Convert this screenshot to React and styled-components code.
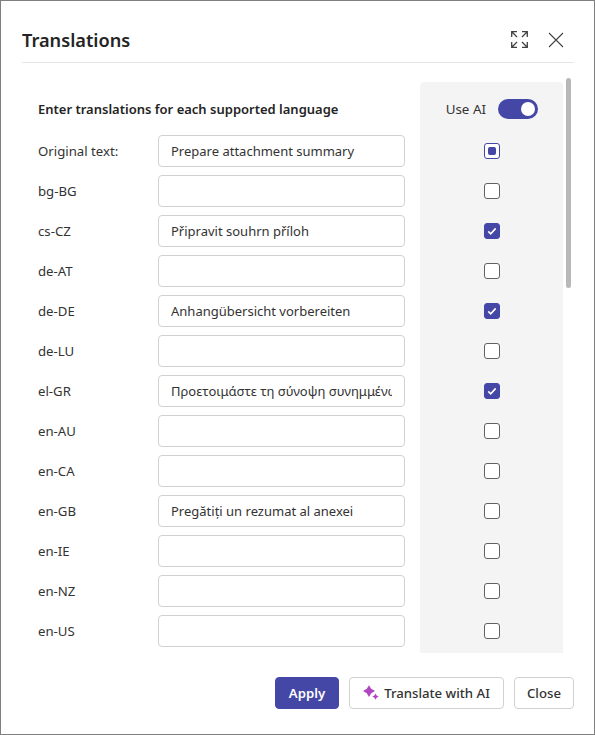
import React from 'react';
import styled, { createGlobalStyle } from 'styled-components';

const GlobalStyle = createGlobalStyle`
  html, body { margin: 0; padding: 0; background: #fff; }
  body { font-family: "Noto Sans", "Open Sans", "Liberation Sans", sans-serif; color: #242424; }
  * { box-sizing: border-box; }
`;

const rows = [
  { label: 'Original text:', value: 'Prepare attachment summary', state: 'mixed' },
  { label: 'bg-BG' },
  { label: 'cs-CZ', value: 'Připravit souhrn příloh', state: 'checked' },
  { label: 'de-AT' },
  { label: 'de-DE', value: 'Anhangübersicht vorbereiten', state: 'checked' },
  { label: 'de-LU' },
  { label: 'el-GR', value: 'Προετοιμάστε τη σύνοψη συνημμένων', state: 'checked' },
  { label: 'en-AU' },
  { label: 'en-CA' },
  { label: 'en-GB', value: 'Pregătiți un rezumat al anexei' },
  { label: 'en-IE' },
  { label: 'en-NZ' },
  { label: 'en-US' },
];

const Dialog = styled.div`
  position: relative;
  width: 595px;
  height: 735px;
  border: 1px solid #7f7f7f;
  background: #fff;
  overflow: hidden;
  display: flex;
  flex-direction: column;
`;

const Header = styled.header`
  height: 62px;
  margin: 0 20px 0 21px;
  border-bottom: 1px solid #e6e6e6;
  display: flex;
  align-items: center;
  justify-content: space-between;
  padding-top: 16px;
`;

const Title = styled.h1`
  margin: 0;
  font-size: 18.2px;
  font-weight: 600;
  line-height: 26px;
`;

const HeaderActions = styled.div`
  display: flex;
  align-items: center;
  gap: 20px;
  margin-right: 10px;
`;

const IconButton = styled.button`
  padding: 0;
  border: 0;
  background: none;
  display: flex;
  color: #424242;
`;

const Body = styled.main`
  height: 590px;
  overflow: hidden;
  display: flex;
  align-items: stretch;
  padding: 19px 0 0 37px;
`;

const FormColumn = styled.section`
  width: 367px;
  margin-right: 15px;
`;

const Heading = styled.h2`
  margin: 7px 0 2px;
  height: 40px;
  font-size: 13px;
  font-weight: 600;
  line-height: 40px;
  white-space: nowrap;
`;

const Row = styled.div`
  height: 40px;
  display: flex;
  align-items: center;
`;

const Label = styled.label`
  width: 120px;
  font-size: 13.2px;
  color: #333;
`;

const TextInput = styled.input`
  width: 247px;
  height: 32px;
  padding: 0 12px;
  border: 1px solid #d1d1d1;
  border-radius: 4px;
  background: #fff;
  color: #333;
  font: inherit;
  font-size: 13px;
  outline: none;
`;

const AiPanel = styled.aside`
  width: 143px;
  background: #f4f4f4;
  border-radius: 4px 4px 0 0;
  padding-top: 7px;
`;

const AiHead = styled.div`
  height: 40px;
  margin-bottom: 2px;
  display: flex;
  align-items: center;
  justify-content: flex-end;
  gap: 12px;
  padding-right: 25px;
  font-size: 13.4px;
  color: #333;
`;

const Toggle = styled.span`
  width: 40px;
  height: 20px;
  border-radius: 10px;
  background: #4447a6;
  display: flex;
  align-items: center;
  justify-content: flex-end;
  padding-right: 3px;
`;

const Knob = styled.span`
  width: 14px;
  height: 14px;
  border-radius: 50%;
  background: #fff;
`;

const CheckRow = styled.div`
  height: 40px;
  display: flex;
  align-items: center;
  justify-content: center;
`;

const Check = styled.span`
  width: 16px;
  height: 16px;
  border-radius: 3px;
  border: 1px solid ${(p) => (p.$state === 'checked' || p.$state === 'mixed' ? '#4447a6' : '#616161')};
  background: ${(p) => (p.$state === 'checked' ? '#4447a6' : '#fff')};
  display: flex;
  align-items: center;
  justify-content: center;
`;

const MixedMark = styled.span`
  width: 8px;
  height: 8px;
  border-radius: 2px;
  background: #4447a6;
`;

const ScrollThumb = styled.div`
  position: absolute;
  top: 77px;
  right: 23px;
  width: 5px;
  height: 210px;
  border-radius: 3px;
  background: #b8b8b8;
`;

const Footer = styled.footer`
  flex: 1;
  display: flex;
  align-items: flex-start;
  justify-content: flex-end;
  gap: 10px;
  padding: 24px 20px 0 0;
`;

const Button = styled.button`
  height: 32px;
  display: flex;
  align-items: center;
  justify-content: center;
  gap: 5px;
  width: ${(p) => p.$width}px;
  padding: 0;
  border-radius: 4px;
  border: 1px solid ${(p) => (p.$primary ? '#4447a6' : '#d1d1d1')};
  background: ${(p) => (p.$primary ? '#4447a6' : '#fff')};
  color: ${(p) => (p.$primary ? '#fff' : '#333')};
  font-family: inherit;
  font-size: 13.2px;
  font-weight: ${(p) => (p.$primary ? 600 : 500)};
`;

const ExpandIcon = () => (
  <svg width="17" height="17" viewBox="0 0 17 17" fill="none" stroke="currentColor" strokeWidth="1.3">
    <path d="M.7 6V.7H6M1 1l5 5" />
    <path d="M16.300 6V.7H11M16 1l-5 5" />
    <path d="M.7 11v5.300H6M1 16l5-5" />
    <path d="M16.300 11v5.300H11M16 16l-5-5" />
  </svg>
);

const CloseIcon = () => (
  <svg width="16" height="16" viewBox="0 0 16 16" fill="none" stroke="currentColor" strokeWidth="1.1">
    <path d="M1 1l14 14M15 1L1 15" />
  </svg>
);

const CheckMark = () => (
  <svg width="10" height="10" viewBox="0 0 10 10" fill="none" stroke="#fff" strokeWidth="1.6">
    <path d="M1.200 5.400l2.500 2.400 5-5.400" />
  </svg>
);

const SparkleIcon = () => (
  <svg width="16" height="16" viewBox="0 0 16 16" fill="#b146c2">
    <path d="M6 .2L8.200 3.800 12 6 8.200 8.200 6 12 3.800 8.200 0 6 3.800 3.800z" />
    <path d="M12.500 8.600l1.100 1.900 2.100 1.100-2.100 1.100-1.100 2.100-1.100-2.100-2.100-1.100 2.100-1.100z" />
  </svg>
);

const App = () => (
  <>
    <GlobalStyle />
    <Dialog>
      <Header>
        <Title>Translations</Title>
        <HeaderActions>
          <IconButton aria-label="Expand"><ExpandIcon /></IconButton>
          <IconButton aria-label="Close dialog"><CloseIcon /></IconButton>
        </HeaderActions>
      </Header>
      <Body>
        <FormColumn>
          <Heading>Enter translations for each supported language</Heading>
          {rows.map((row) => (
            <Row key={row.label}>
              <Label>{row.label}</Label>
              <TextInput readOnly value={row.value || ''} />
            </Row>
          ))}
        </FormColumn>
        <AiPanel>
          <AiHead>
            Use AI
            <Toggle><Knob /></Toggle>
          </AiHead>
          {rows.map((row) => (
            <CheckRow key={row.label}>
              <Check $state={row.state}>
                {row.state === 'mixed' && <MixedMark />}
                {row.state === 'checked' && <CheckMark />}
              </Check>
            </CheckRow>
          ))}
        </AiPanel>
      </Body>
      <ScrollThumb />
      <Footer>
        <Button $primary $width={64}>Apply</Button>
        <Button $width={155}><SparkleIcon />Translate with AI</Button>
        <Button $width={60}>Close</Button>
      </Footer>
    </Dialog>
  </>
);

export default App;
